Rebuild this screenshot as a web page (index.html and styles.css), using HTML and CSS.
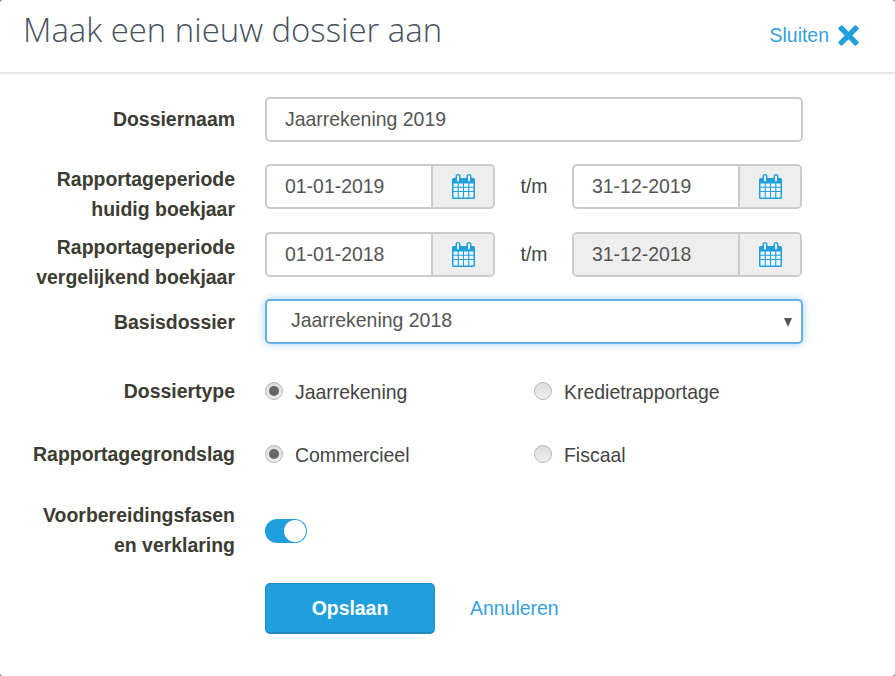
FILE: index.html
```html
<!DOCTYPE html>
<html lang="nl">
<head>
<meta charset="utf-8">
<title>Maak een nieuw dossier aan</title>
<link rel="stylesheet" href="styles.css">
</head>
<body>
<svg class="defs" width="0" height="0" aria-hidden="true">
  <symbol id="cal" viewBox="0 0 23 25">
    <path fill="#1f9fdc" d="M1.5 4H3.500V2.500a2.500 2.500 0 0 1 5 0V4h6V2.500a2.500 2.500 0 0 1 5 0V4h2A1.500 1.500 0 0 1 23 5.500v18a1.500 1.500 0 0 1-1.500 1.500h-20A1.500 1.500 0 0 1 0 23.500v-18A1.500 1.500 0 0 1 1.500 4z"/>
    <path fill="#eee" d="M5 2.300a1 1 0 0 1 2 0V6.500a1 1 0 0 1-2 0zM16 2.300a1 1 0 0 1 2 0V6.500a1 1 0 0 1-2 0z"/>
    <path fill="#eef6fb" d="M1.500 9.500h4.200v3.200H1.500zM6.800 9.500H11v3.200H6.800zM12 9.500h4.200v3.200H12zM17.300 9.500h4.200v3.200h-4.200zM1.500 13.700h4.200v3.200H1.500zM6.800 13.700H11v3.200H6.800zM12 13.700h4.200v3.200H12zM17.300 13.700h4.200v3.200h-4.200zM1.500 18h4.200v5.500H1.500zM6.800 18H11v5.500H6.800zM12 18h4.200v5.500H12zM17.300 18h4.200v5.500h-4.200z"/>
  </symbol>
</svg>
<main class="modal">
  <header class="head">
    <h1 class="title">Maak een nieuw dossier aan</h1>
    <a class="close" href="#">Sluiten
      <svg class="close-x" viewBox="0 0 22 22" aria-hidden="true"><path fill="#1f9fdc" d="M4.800.8 11 7 17.200.8a1.500 1.500 0 0 1 2.100 0l1.900 1.900a1.500 1.500 0 0 1 0 2.100L15 11l6.200 6.200a1.500 1.500 0 0 1 0 2.100l-1.900 1.900a1.500 1.500 0 0 1-2.100 0L11 15l-6.200 6.200a1.500 1.500 0 0 1-2.100 0L.8 19.300a1.500 1.500 0 0 1 0-2.100L7 11 .8 4.800a1.500 1.500 0 0 1 0-2.100L2.700.8a1.500 1.500 0 0 1 2.100 0z"/></svg>
    </a>
  </header>
  <form class="form">
    <div class="row r-name">
      <label class="lab lab-one">Dossiernaam</label>
      <div class="field text-field">Jaarrekening 2019</div>
    </div>
    <div class="row r-cur">
      <label class="lab">Rapportageperiode<br>huidig boekjaar</label>
      <div class="dates">
        <div class="date"><span class="date-val">01-01-2019</span><span class="date-btn"><svg class="cal"><use href="#cal"/></svg></span></div>
        <span class="tm">t/m</span>
        <div class="date"><span class="date-val">31-12-2019</span><span class="date-btn"><svg class="cal"><use href="#cal"/></svg></span></div>
      </div>
    </div>
    <div class="row r-cmp">
      <label class="lab">Rapportageperiode<br>vergelijkend boekjaar</label>
      <div class="dates">
        <div class="date"><span class="date-val">01-01-2018</span><span class="date-btn"><svg class="cal"><use href="#cal"/></svg></span></div>
        <span class="tm">t/m</span>
        <div class="date disabled"><span class="date-val">31-12-2018</span><span class="date-btn"><svg class="cal"><use href="#cal"/></svg></span></div>
      </div>
    </div>
    <div class="row r-base">
      <label class="lab lab-one lab-base">Basisdossier</label>
      <div class="field select">Jaarrekening 2018<span class="caret"></span></div>
    </div>
    <div class="row r-type">
      <label class="lab">Dossiertype</label>
      <div class="radios">
        <span class="radio-item"><span class="radio on"></span>Jaarrekening</span>
        <span class="radio-item"><span class="radio"></span>Kredietrapportage</span>
      </div>
    </div>
    <div class="row r-basis">
      <label class="lab">Rapportagegrondslag</label>
      <div class="radios">
        <span class="radio-item"><span class="radio on"></span>Commercieel</span>
        <span class="radio-item"><span class="radio"></span>Fiscaal</span>
      </div>
    </div>
    <div class="row r-toggle">
      <label class="lab">Voorbereidingsfasen<br>en verklaring</label>
      <div class="toggle-wrap"><span class="toggle"><span class="knob"></span></span></div>
    </div>
    <div class="row r-actions">
      <span></span>
      <div class="actions">
        <button class="save" type="button">Opslaan</button>
        <a class="cancel" href="#">Annuleren</a>
      </div>
    </div>
  </form>
</main>
</body>
</html>
```
FILE: styles.css
```css
* { box-sizing: border-box; }
html, body { margin: 0; padding: 0; height: 100%; }
body {
  background: #666;
  font-family: "Liberation Sans", Arial, sans-serif;
  font-size: 19.45px;
  color: #444;
  overflow: hidden;
}
.defs { display: block; height: 0; }
.modal {
  width: 895px;
  height: 676px;
  background: #fff;
  border-radius: 3px;
}
.head {
  height: 74px;
  border-bottom: 2px solid #e6e6e6;
  display: flex;
  align-items: flex-start;
  justify-content: space-between;
  padding: 0 36px 0 23px;
}
.title {
  margin: 8px 0 0;
  font-family: "Open Sans", sans-serif;
  font-weight: 300;
  font-size: 32.9px;
  line-height: 44px;
  color: #46515e;
}
.close {
  margin-top: 23px;
  display: flex;
  align-items: center;
  gap: 9px;
  color: #359fdc;
  text-decoration: none;
  line-height: 24px;
}
.close-x { width: 21px; height: 21px; }
.form { padding-top: 23px; }
.row {
  display: grid;
  grid-template-columns: 235px 538px;
  column-gap: 30px;
  align-items: start;
}
.lab {
  text-align: right;
  font-weight: 700;
  line-height: 30px;
  color: #3c3c32;
}
.lab-one { line-height: 45px; }
.lab-base { padding-top: 1px; }
.r-name { margin-bottom: 22px; }
.r-cur { margin-bottom: 8px; }
.r-cmp { margin-bottom: 7px; }
.r-base { margin-bottom: 31px; }
.r-type { margin-bottom: 33px; }
.r-basis { margin-bottom: 31px; }
.r-toggle { margin-bottom: 21px; }
.field {
  height: 45px;
  border: 2px solid #ccc;
  border-radius: 5px;
  background: #fff;
  padding-left: 18px;
  line-height: 41px;
  color: #555;
}
.dates {
  display: flex;
  align-items: center;
  width: 537px;
}
.date {
  width: 230px;
  height: 45px;
  border: 2px solid #ccc;
  border-radius: 5px;
  display: flex;
  overflow: hidden;
  background: #fff;
}
.date-val {
  flex: 1;
  padding-left: 18px;
  line-height: 41px;
  color: #555;
}
.date.disabled .date-val { background: #eee; }
.date-btn {
  width: 62px;
  background: #eee;
  border-left: 2px solid #ccc;
  display: flex;
  align-items: center;
  justify-content: center;
}
.cal { width: 23px; height: 25px; }
.tm {
  width: 77px;
  padding-left: 1px;
  text-align: center;
  color: #444;
}
.select {
  position: relative;
  border-color: #66afe9;
  padding-left: 24px;
  box-shadow: 0 0 8px rgba(102, 175, 233, .6);
  line-height: 38px;
}
.caret {
  position: absolute;
  right: 9px;
  top: 17px;
  border-left: 4.500px solid transparent;
  border-right: 4.500px solid transparent;
  border-top: 9px solid #555;
}
.radios {
  display: grid;
  grid-template-columns: 269px 1fr;
  height: 30px;
  align-items: center;
}
.radio-item {
  display: flex;
  align-items: center;
  gap: 12px;
  padding-top: 2px;
  color: #444;
}
.radio {
  width: 18px;
  height: 18px;
  margin-top: -2px;
  border-radius: 50%;
  border: 1px solid #b8b8b8;
  background: linear-gradient(#dcdcdc, #efefef);
  display: flex;
  align-items: center;
  justify-content: center;
}
.radio.on::after {
  content: "";
  width: 10px;
  height: 10px;
  border-radius: 50%;
  background: #666;
}
.toggle-wrap {
  height: 62px;
  display: flex;
  align-items: center;
}
.toggle {
  width: 42px;
  height: 24px;
  border-radius: 12px;
  background: #1f9fdc;
  display: flex;
  justify-content: flex-end;
  padding: 1px;
}
.knob {
  width: 22px;
  height: 22px;
  border-radius: 50%;
  background: #fff;
}
.actions {
  display: flex;
  align-items: center;
  gap: 35px;
}
.save {
  width: 170px;
  height: 51px;
  border: 1px solid #1f8bc1;
  border-bottom-width: 2px;
  border-radius: 5px;
  background: #1f9fdc;
  color: #fff;
  font: 700 19.4px "Liberation Sans", Arial, sans-serif;
}
.cancel {
  color: #359fdc;
  text-decoration: none;
}
```
